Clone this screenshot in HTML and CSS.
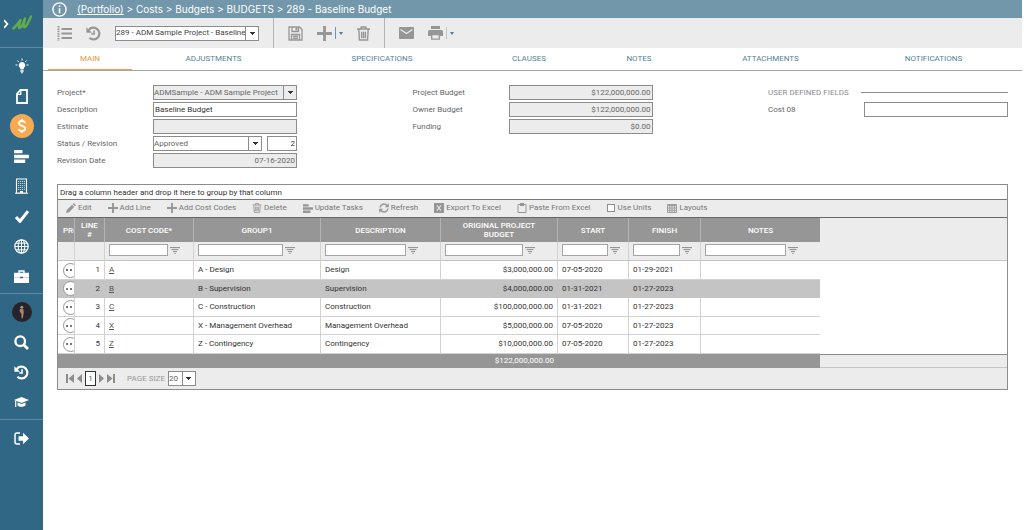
FILE: index.html
```html
<!DOCTYPE html>
<html lang="en">
<head>
    <meta charset="UTF-8">
    <meta name="viewport" content="width=device-width, initial-scale=1.0">
    <title>289 - Baseline Budget</title>
    <link rel="stylesheet" href="styles.css">
</head>
<body>
    <!-- shared icons -->
    <svg class="sprite" aria-hidden="true">
        <symbol id="i-history" viewBox="0 0 16 16">
            <path d="M3 4.2A6.3 6.3 0 1 1 3.6 12.6" fill="none" stroke="currentColor" stroke-width="2.4"/>
            <path d="M.4 1.2v6h6z" fill="currentColor"/>
            <path d="M8.6 4.6v4H5.6" fill="none" stroke="currentColor" stroke-width="1.7"/>
        </symbol>
        <symbol id="i-plus" viewBox="0 0 16 16"><path d="M8 0v16M0 8h16" stroke="currentColor" stroke-width="3"/></symbol>
        <symbol id="i-trash" viewBox="0 0 14 16">
            <path d="M0 3.200h14M4.500 3V1h5v2M2 4l.6 11h8.800L12 4M5 6v7M7 6v7M9 6v7" fill="none" stroke="currentColor" stroke-width="1.5"/>
        </symbol>
        <symbol id="i-tasks" viewBox="0 0 16 14"><path d="M0 0h9v3.6H0zM0 5h16v3.8H0zM0 10.2h12V14H0z" fill="currentColor"/></symbol>
        <symbol id="i-filter" viewBox="0 0 10 7"><path d="M0 .6h10M1.6 2.6h6.8M3 4.6h4M4.3 6.4h1.4" stroke="currentColor" stroke-width="1"/></symbol>
    </svg>

    <nav class="sidebar">
        <a class="sidebar__logo" href="#" aria-label="Home">
            <svg width="28" height="18" viewBox="0 0 28 18">
                <path d="M0 5l3.400 4L0 13" fill="none" stroke="#fff" stroke-width="1.8"/>
                <path d="M9.500 13.500C12 11 14.500 8 16.500 5C15.300 9 14 12.500 15 13C17 13 19.500 8 21 3.500C20 7.500 19 12 20.500 12.200C22.800 12 25 6 27 1.500" fill="none" stroke="#62ab4c" stroke-width="2.500" stroke-linecap="round" stroke-linejoin="round"/>
            </svg>
        </a>
        <div class="sidebar__group">
            <a href="#" aria-label="Ideas"><svg width="14" height="16" viewBox="0 0 14 16"><path d="M7 4a3.300 3.300 0 0 0-2 5.900c.5.600.5 1 .5 1.600h3c0-.6 0-1 .5-1.600A3.300 3.300 0 0 0 7 4zM5.300 12.300h3.400v1.500H5.300zM6 14.300h2v1H6z" fill="currentColor"/><path d="M7 .5v2M2.300 2.500l1.400 1.400M11.700 2.500l-1.400 1.400M.5 7h2M11.500 7h2" stroke="currentColor"/></svg></a>
            <a href="#" aria-label="Documents"><svg width="12" height="15" viewBox="0 0 12 15"><path d="M4.500 1H11v13H1V4.800z" fill="none" stroke="currentColor" stroke-width="1.800"/><path d="M4.800 1v4.300H1" fill="none" stroke="currentColor" stroke-width="1.300"/></svg></a>
            <a class="active" href="#" aria-label="Costs"><svg width="12" height="16" viewBox="0 0 12 16"><path d="M9 5C8.600 3.600 7.500 3 6 3 4.200 3 3 3.900 3 5.300 3 8.600 9.200 7 9.200 10.600 9.200 12.200 7.900 13 6 13 4.300 13 3.100 12.300 2.700 10.900M6 1v2M6 13v2" fill="none" stroke="currentColor" stroke-width="1.800"/></svg></a>
            <a href="#" aria-label="Schedule"><svg width="15" height="13"><use href="#i-tasks"/></svg></a>
            <a href="#" aria-label="Assets"><svg width="13" height="16" viewBox="0 0 13 16"><path d="M1.500 1h10v14h-10zM0 15.200h13" fill="none" stroke="currentColor" stroke-width="1.100"/><path d="M3 3.500h7M3 5.500h7M3 7.500h7M3 9.500h7M3 11.500h7" stroke="currentColor" stroke-width=".9" stroke-dasharray="1.200 .8" opacity=".8"/><path d="M5 13h3v2H5z" fill="currentColor"/></svg></a>
            <a href="#" aria-label="Approvals"><svg width="14" height="13" viewBox="0 0 14 13"><path d="M1 7l4 4.300L13 1.200" fill="none" stroke="currentColor" stroke-width="3"/></svg></a>
            <a href="#" aria-label="Web"><svg width="15" height="15" viewBox="0 0 15 15" fill="none" stroke="currentColor"><circle cx="7.500" cy="7.500" r="6.700" stroke-width="1.200"/><ellipse cx="7.500" cy="7.500" rx="3.300" ry="6.700"/><path d="M7.500 1v13M1 7.500h13M2 4.200h11M2 10.800h11"/></svg></a>
            <a href="#" aria-label="Briefcase"><svg width="15" height="13" viewBox="0 0 15 13"><path d="M5 3V1h5v2" fill="none" stroke="currentColor" stroke-width="1.300"/><path d="M0 2.800h15v4.400H9v-.4H6v.4H0zM0 7.600h6v.6h3v-.6h6V13H0z" fill="currentColor"/></svg></a>
        </div>
        <div class="sidebar__group">
            <a href="#" aria-label="Profile"><svg width="20" height="20" viewBox="0 0 20 20"><circle cx="10" cy="10" r="10" fill="#26242a"/><circle cx="9.800" cy="5.300" r="1.500" fill="#b58f78"/><path d="M8 7l3.500.2.200 4-1 5-1.200.2V12L7.500 9z" fill="#a98672"/></svg></a>
            <a href="#" aria-label="Search"><svg width="15" height="15" viewBox="0 0 15 15" fill="none" stroke="currentColor"><circle cx="6.200" cy="6.200" r="4.800" stroke-width="2.300"/><path d="M9.800 9.800l4.200 4.200" stroke-width="2.800"/></svg></a>
            <a href="#" aria-label="Recent"><svg width="15" height="15"><use href="#i-history"/></svg></a>
            <a href="#" aria-label="Training"><svg width="15" height="11" viewBox="0 0 15 11"><path d="M7.500 0L15 3 7.500 6 0 3z" fill="currentColor"/><path d="M3.500 5.500l4 1.600 4-1.600v3c-2 1.800-6 1.800-8 0z" fill="currentColor"/><path d="M1.700 3.500V10" stroke="currentColor" stroke-width="1.200"/></svg></a>
        </div>
        <div class="sidebar__group">
            <a href="#" aria-label="Log out"><svg width="15" height="13" viewBox="0 0 15 13"><path d="M6 1H3a2 2 0 0 0-2 2v7a2 2 0 0 0 2 2h3" fill="none" stroke="currentColor" stroke-width="1.500"/><path d="M4.500 4.200H9V.8l6 5.700-6 5.700V8.800H4.500z" fill="currentColor"/></svg></a>
        </div>
    </nav>

    <main class="main">
        <header class="topbar">
            <svg width="15" height="15" viewBox="0 0 15 15"><circle cx="7.500" cy="7.500" r="6.600" fill="none" stroke="currentColor" stroke-width="1.400"/><path d="M7.500 6.300v5M7.500 3.400v1.700" stroke="currentColor" stroke-width="1.600"/></svg>
            <div class="breadcrumb"><a href="#">(Portfolio)</a> &gt; Costs &gt; Budgets &gt; BUDGETS &gt; 289 - Baseline Budget</div>
        </header>

        <div class="toolbar">
            <div class="toolbar__group">
                <button type="button" aria-label="List"><svg width="15" height="15" viewBox="0 0 15 15" stroke="currentColor"><path d="M4.500 3H15M4.500 7.500H15M4.500 12H15" stroke-width="2"/><path d="M1.500 0v15" stroke-width="2" stroke-dasharray="1.500 .9"/></svg></button>
                <button type="button" aria-label="History"><svg width="15" height="15"><use href="#i-history"/></svg></button>
                <span class="select select--record"><select aria-label="Record"><option>289 - ADM Sample Project - Baseline Budget</option></select></span>
            </div>
            <div class="toolbar__group">
                <button type="button" aria-label="Save"><svg width="15" height="15" viewBox="0 0 15 15"><path d="M1 1h10.500L14 3.500V14H1zM4 1v4.500h6.500V1M3.500 14V8.500h8V14M5 10.500h5M5 12.300h5" fill="none" stroke="currentColor" stroke-width="1.300"/><path d="M7.500 1.500h2v3h-2z" fill="currentColor"/></svg></button>
                <div class="split">
                    <button type="button" aria-label="Add"><svg width="15" height="15"><use href="#i-plus"/></svg></button>
                    <button class="split__more" type="button" aria-label="More add options"></button>
                </div>
                <button type="button" aria-label="Delete"><svg width="13" height="15"><use href="#i-trash"/></svg></button>
            </div>
            <div class="toolbar__group">
                <button type="button" aria-label="Email"><svg width="15" height="12" viewBox="0 0 15 12"><path d="M1 0h13a1 1 0 0 1 1 1v10a1 1 0 0 1-1 1H1a1 1 0 0 1-1-1V1a1 1 0 0 1 1-1z" fill="currentColor"/><path d="M1.500 2.500l6 4 6-4" fill="none" stroke="#ececec" stroke-width="1.200"/></svg></button>
                <div class="split split--grey">
                    <button type="button" aria-label="Print"><svg width="15" height="14" viewBox="0 0 15 14"><path d="M3 0h9v3H3zM1.500 4h12A1.500 1.500 0 0 1 15 5.500V10h-3V8H3v2H0V5.500A1.500 1.500 0 0 1 1.500 4z" fill="currentColor"/><path d="M3.700 8.700h7.600v4.500H3.700z" fill="none" stroke="currentColor" stroke-width="1.300"/></svg></button>
                    <button class="split__more" type="button" aria-label="More print options"></button>
                </div>
            </div>
        </div>

        <nav class="tabs">
            <a class="tab tab--xs tab--active" href="#">MAIN</a>
            <a class="tab tab--lg" href="#">ADJUSTMENTS</a>
            <a class="tab tab--xl" href="#">SPECIFICATIONS</a>
            <a class="tab tab--md" href="#">CLAUSES</a>
            <a class="tab tab--sm" href="#">NOTES</a>
            <a class="tab tab--lg" href="#">ATTACHMENTS</a>
            <a class="tab tab--lg" href="#">NOTIFICATIONS</a>
        </nav>

        <form class="form">
            <div class="form__col">
                <div class="field"><label for="project">Project*</label><span class="select select--filled"><select id="project"><option>ADMSample - ADM Sample Project</option></select></span></div>
                <div class="field"><label for="description">Description</label><input class="dark" id="description" type="text" value="Baseline Budget"></div>
                <div class="field"><label for="estimate">Estimate</label><input id="estimate" type="text" readonly></div>
                <div class="field"><label for="status">Status / Revision</label><span class="select"><select id="status"><option>Approved</option></select></span><input class="num revision dark" type="text" value="2" aria-label="Revision"></div>
                <div class="field"><label for="revdate">Revision Date</label><input class="num" id="revdate" type="text" value="07-16-2020" readonly></div>
            </div>
            <div class="form__col">
                <div class="field"><label for="pbudget">Project Budget</label><input class="num" id="pbudget" type="text" value="$122,000,000.00" readonly></div>
                <div class="field"><label for="obudget">Owner Budget</label><input class="num" id="obudget" type="text" value="$122,000,000.00" readonly></div>
                <div class="field"><label for="funding">Funding</label><input class="num" id="funding" type="text" value="$0.00" readonly></div>
            </div>
            <div class="form__col">
                <div class="form__heading">USER DEFINED FIELDS</div>
                <div class="field"><label for="cost08">Cost 08</label><input id="cost08" type="text"></div>
            </div>
        </form>

        <section class="grid">
            <div class="grid__drop">Drag a column header and drop it here to group by that column</div>
            <div class="grid__tools">
                <button type="button"><svg width="10" height="10" viewBox="0 0 10 10"><path d="M0 10l.8-3L6 1.800 8.200 4 3 9.200zM6.700 1.100L7.800 0 10 2.200 8.900 3.300z" fill="currentColor"/></svg>Edit</button>
                <button type="button"><svg width="10" height="10"><use href="#i-plus"/></svg>Add Line</button>
                <button type="button"><svg width="10" height="10"><use href="#i-plus"/></svg>Add Cost Codes</button>
                <button type="button"><svg width="10" height="10"><use href="#i-trash"/></svg>Delete</button>
                <button type="button"><svg width="10" height="9"><use href="#i-tasks"/></svg>Update Tasks</button>
                <button type="button"><svg width="10" height="10" viewBox="0 0 10 10"><path d="M1 4.500A4 4 0 0 1 8 2.500M9 5.500A4 4 0 0 1 2 7.500" fill="none" stroke="currentColor" stroke-width="1.500"/><path d="M9.800.3v4H5.800zM.2 9.700v-4h4z" fill="currentColor"/></svg>Refresh</button>
                <button type="button"><svg width="10" height="10" viewBox="0 0 10 10"><path d="M0 0h10v10H0z" fill="currentColor"/><path d="M3 2.500l4 5M7 2.500l-4 5" stroke="#ececec" stroke-width="1.200"/></svg>Export To Excel</button>
                <button type="button"><svg width="10" height="10" viewBox="0 0 10 10"><path d="M1 1.500h8v8H1z" fill="none" stroke="currentColor"/><path d="M3 0h4v3H3z" fill="currentColor"/></svg>Paste From Excel</button>
                <label><input type="checkbox">Use Units</label>
                <button type="button"><svg width="10" height="9" viewBox="0 0 10 9"><path d="M.5.500h9v8h-9zM.5 1.500h9M.5 4h9M.5 6.300h9M2.800 1v7.500M5 1v7.500M7.300 1v7.500" fill="none" stroke="currentColor" stroke-width=".9"/></svg>Layouts</button>
            </div>

            <table class="table">
                <colgroup>
                    <col class="c-pro"><col class="c-line"><col class="c-code"><col class="c-group"><col class="c-desc"><col class="c-budget"><col class="c-start"><col class="c-finish"><col class="c-notes"><col>
                </colgroup>
                <thead>
                    <tr class="table__head">
                        <th>PRO</th><th>LINE #</th><th>COST CODE*</th><th>GROUP1</th><th>DESCRIPTION</th><th class="wrap">ORIGINAL PROJECT BUDGET</th><th>START</th><th>FINISH</th><th>NOTES</th><td></td>
                    </tr>
                    <tr class="table__filter">
                        <td></td>
                        <td></td>
                        <td><input type="text" aria-label="Filter cost code"><svg width="10" height="7"><use href="#i-filter"/></svg></td>
                        <td><input type="text" aria-label="Filter group"><svg width="10" height="7"><use href="#i-filter"/></svg></td>
                        <td><input type="text" aria-label="Filter description"><svg width="10" height="7"><use href="#i-filter"/></svg></td>
                        <td><input type="text" aria-label="Filter budget"><svg width="10" height="7"><use href="#i-filter"/></svg></td>
                        <td><input type="text" aria-label="Filter start"><svg width="10" height="7"><use href="#i-filter"/></svg></td>
                        <td><input type="text" aria-label="Filter finish"><svg width="10" height="7"><use href="#i-filter"/></svg></td>
                        <td><input type="text" aria-label="Filter notes"><svg width="10" height="7"><use href="#i-filter"/></svg></td>
                        <td></td>
                    </tr>
                </thead>
                <tbody>
                    <tr><td><button class="dots" type="button" aria-label="Row menu"></button></td><td class="num">1</td><td><a href="#">A</a></td><td>A - Design</td><td>Design</td><td class="num">$3,000,000.00</td><td>07-05-2020</td><td>01-29-2021</td><td></td><td></td></tr>
                    <tr class="selected"><td><button class="dots" type="button" aria-label="Row menu"></button></td><td class="num">2</td><td><a href="#">B</a></td><td>B - Supervision</td><td>Supervision</td><td class="num">$4,000,000.00</td><td>01-31-2021</td><td>01-27-2023</td><td></td><td></td></tr>
                    <tr><td><button class="dots" type="button" aria-label="Row menu"></button></td><td class="num">3</td><td><a href="#">C</a></td><td>C - Construction</td><td>Construction</td><td class="num">$100,000,000.00</td><td>01-31-2021</td><td>01-27-2023</td><td></td><td></td></tr>
                    <tr><td><button class="dots" type="button" aria-label="Row menu"></button></td><td class="num">4</td><td><a href="#">X</a></td><td>X - Management Overhead</td><td>Management Overhead</td><td class="num">$5,000,000.00</td><td>07-05-2020</td><td>01-27-2023</td><td></td><td></td></tr>
                    <tr><td><button class="dots" type="button" aria-label="Row menu"></button></td><td class="num">5</td><td><a href="#">Z</a></td><td>Z - Contingency</td><td>Contingency</td><td class="num">$10,000,000.00</td><td>07-05-2020</td><td>01-27-2023</td><td></td><td></td></tr>
                </tbody>
                <tfoot>
                    <tr><td colspan="5"></td><td class="num">$122,000,000.00</td><td colspan="3"></td><td></td></tr>
                </tfoot>
            </table>

            <div class="pager">
                <button type="button" aria-label="First page"><svg width="8" height="9" viewBox="0 0 8 9"><path d="M0 0h2v9H0zM8 0v9L2.500 4.500z" fill="currentColor"/></svg></button>
                <button type="button" aria-label="Previous page"><svg width="5" height="9" viewBox="0 0 5 9"><path d="M5 0v9L0 4.500z" fill="currentColor"/></svg></button>
                <button class="pager__page" type="button">1</button>
                <button type="button" aria-label="Next page"><svg width="5" height="9" viewBox="0 0 5 9"><path d="M0 0v9l5-4.500z" fill="currentColor"/></svg></button>
                <button type="button" aria-label="Last page"><svg width="8" height="9" viewBox="0 0 8 9"><path d="M6 0h2v9H6zM0 0v9l5.500-4.500z" fill="currentColor"/></svg></button>
                <label for="pagesize">PAGE SIZE</label>
                <span class="select select--page"><select id="pagesize"><option>20</option></select></span>
            </div>
        </section>
    </main>
</body>
</html>
```
FILE: styles.css
```css
* {
    box-sizing: border-box;
}

body {
    margin: 0;
    min-height: 100vh;
    display: flex;
    background-color: #fff;
    color: #666;
    font-family: Roboto, "Liberation Sans", sans-serif;
    font-size: 8px;
    line-height: 10px;
}

input,
select,
button {
    margin: 0;
    padding: 0;
    border: 0;
    border-radius: 0;
    background: none;
    color: inherit;
    font: inherit;
}

svg {
    display: block;
    flex: none;
}

.sprite {
    position: absolute;
    width: 0;
    height: 0;
}

/* sidebar */
.sidebar {
    flex: 0 0 43px;
    background-color: #306785;
    color: #fff;
}

.sidebar__logo {
    display: flex;
    height: 47px;
    padding-left: 4px;
    align-items: center;
}

.sidebar__group {
    padding: 3px 0 2px;
    border-top: 1px solid #5f8aa1;
}

.sidebar__group a {
    display: flex;
    height: 30px;
    align-items: center;
    justify-content: center;
    color: #fff;
}

.sidebar__group .active svg {
    box-sizing: content-box;
    padding: 4px 6px;
    border-radius: 50%;
    background-color: #f9a950;
}

/* header and toolbar */
.main {
    flex: 1;
    min-width: 0;
    margin-right: 2px;
}

.topbar {
    display: flex;
    height: 18px;
    padding-left: 9px;
    align-items: center;
    gap: 10px;
    background-color: #7296aa;
    color: #fff;
}

.breadcrumb {
    font-family: Inter, "Liberation Sans", sans-serif;
    font-size: 10px;
}

.breadcrumb a {
    color: inherit;
}

.toolbar {
    display: flex;
    height: 30px;
    background-color: #ececec;
    color: #969696;
}

.toolbar__group {
    display: flex;
    padding: 0 14px;
    align-items: center;
    gap: 14px;
}

.toolbar__group + .toolbar__group {
    border-left: 1px solid #b4b4b4;
}

.split {
    display: flex;
    align-items: center;
    gap: 3px;
}

.split__more {
    height: 12px;
    padding-left: 3px;
    border-left: 1px solid #6f94aa;
}

.split--grey .split__more {
    border-left-color: #c4c4c4;
}

.split__more::after {
    content: "";
    display: block;
    border: 2px solid transparent;
    border-top: 3px solid #4d7c97;
    border-bottom: 0;
}

/* drop-downs */
.select {
    position: relative;
    display: flex;
    flex: 1;
    height: 15px;
    border: 1px solid #8c8c8c;
    background-color: #fff;
    color: #666;
}

.select select {
    width: 100%;
    padding: 0 13px 0 0;
    appearance: none;
}

.select::after {
    content: "";
    position: absolute;
    top: 0;
    right: 0;
    bottom: 0;
    width: 12px;
    border-left: 1px solid #8c8c8c;
    background: linear-gradient(#333, #333) center 5px / 5px 1px no-repeat,
        linear-gradient(#333, #333) center 6px / 3px 1px no-repeat,
        linear-gradient(#333, #333) center 7px / 1px 1px no-repeat;
    pointer-events: none;
}

.select--filled {
    background-color: #ececec;
}

.select--record {
    flex: 0 0 144px;
    color: #444;
}

.select--page {
    flex: 0 0 28px;
}

/* tabs */
.tabs {
    display: flex;
    height: 23px;
    padding: 0 7px 0 5px;
    border-bottom: 1px solid #a5a5a5;
}

.tab {
    border-bottom: 1px solid transparent;
    color: #577f97;
    line-height: 21px;
    text-align: center;
    text-decoration: none;
}

.tab--xs { flex: 84; }
.tab--sm { flex: 100; }
.tab--md { flex: 120; }
.tab--lg { flex: 163; }
.tab--xl { flex: 174; }

.tab--active {
    border-bottom-color: #f0a04b;
    color: #e59645;
}

/* details form */
.form {
    display: grid;
    grid-template-columns: repeat(3, 240px);
    justify-content: space-between;
    padding: 14px 14px 16px;
}

.form__col {
    display: flex;
    flex-direction: column;
    gap: 2px;
}

.field {
    display: flex;
    height: 15px;
    align-items: center;
}

.field label {
    flex: 0 0 96px;
}

.field input {
    flex: 1;
    min-width: 0;
    height: 15px;
    padding: 0 1px;
    border: 1px solid #8c8c8c;
    background-color: #fff;
}

.field input[readonly] {
    background-color: #ececec;
}

.field .dark {
    color: #333;
}

.field .revision {
    flex: 0 0 30px;
    margin-left: 5px;
}

.num {
    text-align: right;
}

.form__heading {
    display: flex;
    height: 15px;
    align-items: center;
    gap: 12px;
    color: #8c8c8c;
}

.form__heading::after {
    content: "";
    flex: 1;
    height: 1px;
    background-color: #8c8c8c;
}

/* budget lines */
.grid {
    margin: 0 14px;
    border: 1px solid #8c8c8c;
    background-color: #ececec;
}

.grid__drop {
    height: 15px;
    padding: 0 2px;
    border-bottom: 1px solid #777;
    background-color: #fff;
    color: #333;
    line-height: 15px;
}

.grid__tools {
    display: flex;
    height: 18px;
    padding: 0 8px 1px;
    align-items: center;
    gap: 16px;
    border-bottom: 1px solid #666;
    color: #777;
}

.grid__tools svg {
    color: #969696;
}

.grid__tools button,
.grid__tools label {
    display: flex;
    align-items: center;
    gap: 2px;
    white-space: nowrap;
}

.grid__tools input {
    width: 8px;
    height: 8px;
    margin-right: 1px;
    border: 1px solid #8c8c8c;
    background-color: #fff;
    appearance: none;
}

.table {
    width: 100%;
    table-layout: fixed;
    border-collapse: separate;
    border-spacing: 0;
}

.c-pro { width: 17px; }
.c-line { width: 30px; }
.c-code { width: 89px; }
.c-group { width: 127px; }
.c-desc { width: 120px; }
.c-budget { width: 117px; }
.c-start { width: 71px; }
.c-finish { width: 72px; }
.c-notes { width: 119px; }

.table th,
.table td {
    padding: 0 4px;
    overflow: hidden;
    white-space: nowrap;
}

.table tr > :first-child {
    padding: 0 0 0 5px;
}

.table__head {
    height: 24px;
}

.table__head th {
    border-right: 1px solid #b4b4b4;
    background-color: #969696;
    color: #fff;
    font-weight: 500;
    line-height: 9px;
}

.table__head th:first-child {
    text-align: left;
}

.table__head th:nth-child(2) {
    padding: 0 6px;
    white-space: normal;
}

.table__head .wrap {
    padding: 0 16px;
    white-space: normal;
}

.table__head th:nth-child(9) {
    border-right: 0;
}

.table__filter {
    height: 19px;
}

.table__filter td {
    border-right: 1px solid #d2d2d2;
    border-bottom: 1px solid #c4c4c4;
    vertical-align: top;
}

.table .table__filter td {
    padding: 2px 0 0 4px;
}

.table__filter td:nth-child(n+9) {
    border-right: 0;
}

.table__filter input {
    display: inline-block;
    width: 70%;
    height: 12px;
    border: 1px solid #a5a5a5;
    background-color: #fff;
    vertical-align: middle;
}

.table__filter svg {
    display: inline-block;
    margin-left: 2px;
    color: #8c8c8c;
    vertical-align: middle;
}

.table tbody tr {
    height: 19px;
    background-color: #fff;
    color: #333;
}

.table tbody tr:nth-child(even) {
    height: 18px;
}

.table tbody td {
    height: inherit;
    border-right: 1px solid #d2d2d2;
    border-bottom: 1px solid #d2d2d2;
}

.table tbody td:nth-child(n+9) {
    border-right: 0;
}

.table tbody td:last-child {
    border-bottom: 0;
    background-color: #fff;
}

.table tbody .selected {
    background-color: #c4c4c4;
}

.table tbody .selected td {
    border-color: #c4c4c4;
}

.table tbody a {
    color: #555;
}

.dots {
    display: block;
    width: 15px;
    height: 15px;
    border: 1px solid #969696;
    border-radius: 50%;
    background: linear-gradient(90deg, #777 2px, transparent 2px) 2px center / 4px 2px repeat-x #fff;
}

.table tfoot tr {
    height: 14px;
}

.table tfoot td {
    background-color: #969696;
    color: #fff;
}

.table tfoot td:last-child {
    border-top: 1px solid #8c8c8c;
    border-bottom: 1px solid #c4c4c4;
    background-color: #ececec;
}

.pager {
    display: flex;
    height: 21px;
    padding-left: 8px;
    align-items: center;
    gap: 3px;
    color: #8c8c8c;
}

.pager__page {
    width: 11px;
    height: 15px;
    border: 1px solid #333;
    background-color: #fff;
    color: #306785;
}

.pager label {
    margin-left: 9px;
    color: #969696;
}
```
